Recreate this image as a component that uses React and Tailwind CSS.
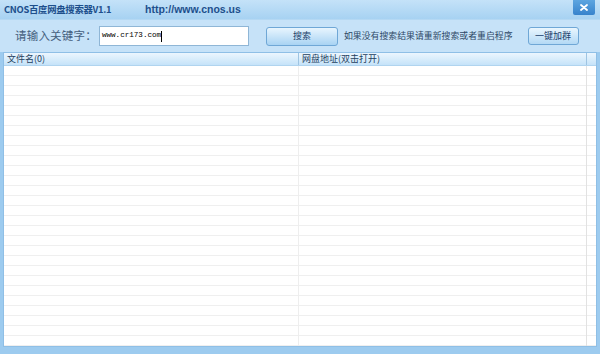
export default function App() {
    const cjk = { fontFamily: '"Noto Sans CJK SC", "Liberation Sans", sans-serif' }

    return (
        <div className="w-[600px] h-[354px] flex flex-col bg-[#9dcbef] overflow-hidden" style={cjk}>

            {/* Title bar */}
            <div className="h-[19px] flex items-start bg-gradient-to-b from-[#c4e2f8] to-[#a7d2f2]">
                <div className="flex items-center h-[19px] pl-[4px]">
                    <span className="w-[141px] text-[9.4px] font-bold text-[#1d4f8c] tracking-[-0.3px]">CNOS百度网盘搜索器V1.1</span>
                    <span
                        className="text-[10.5px] font-bold text-[#1d4f8c]"
                        style={{ fontFamily: '"Liberation Sans", sans-serif' }}
                    >
                        http://www.cnos.us
                    </span>
                </div>
                <div className="ml-auto mr-[5px] w-[22px] h-[15px] bg-gradient-to-b from-[#5da5e0] to-[#3783cc] rounded-b-[2px] flex items-center justify-center">
                    <svg width="8" height="7" viewBox="0 0 8 7">
                        <path d="M1 1 L7 6 M7 1 L1 6" stroke="#fff" strokeWidth="1.8" strokeLinecap="round" />
                    </svg>
                </div>
            </div>

            {/* Search toolbar */}
            <div className="h-[33px] flex items-center bg-[#c6e2f8] border-t border-[#b4d8f3]">
                <span className="ml-[15px] text-[11.5px] text-[#45607e] tracking-[0.2px]">请输入关键字：</span>
                <div className="ml-[2px] w-[150px] h-[20px] bg-white border border-[#8fb6d6] flex items-center pl-[2px]">
                    <span className="text-[7.6px] text-black" style={{ fontFamily: '"Liberation Mono", monospace' }}>www.cr173.com</span>
                    <span className="w-px h-[11px] bg-black" />
                </div>
                <button className="ml-[17px] w-[72px] h-[19px] rounded-[3px] border border-[#6fa7d6] bg-gradient-to-b from-[#e8f5fe] to-[#a8d3f3] text-[9px] text-[#20406a] flex items-center justify-center">
                    搜索
                </button>
                <span className="ml-[6px] text-[8.9px] text-[#2e4866]">如果没有搜索结果请重新搜索或者重启程序</span>
                <button className="ml-[15px] w-[51px] h-[18px] rounded-[3px] border border-[#6fa7d6] bg-gradient-to-b from-[#eaf6fe] to-[#b3d9f5] text-[9px] text-[#20406a] flex items-center justify-center">
                    一键加群
                </button>
            </div>

            {/* Result list */}
            <div className="flex-1 mx-[3px] mb-[7px] flex flex-col bg-white border border-[#8fbfe6]">
                <div className="h-[13px] flex items-center bg-gradient-to-b from-[#ecf6fe] to-[#c5e3f9] border-b border-[#b0d4ef] text-[9px] text-[#24405e]">
                    <div className="w-[295px] pl-[3px] border-r border-[#9ec4e2] h-full flex items-center">文件名(0)</div>
                    <div className="w-[288px] pl-[3px] border-r border-[#9ec4e2] h-full flex items-center">网盘地址(双击打开)</div>
                </div>
                <div className="flex-1 flex bg-[repeating-linear-gradient(to_bottom,transparent_0px,transparent_9px,#efefef_9px,#efefef_10px)]">
                    <div className="w-[295px] border-r border-[#eeeeee]" />
                    <div className="w-[288px] border-r border-[#e2e2e2]" />
                </div>
            </div>
        </div>
    )
}
